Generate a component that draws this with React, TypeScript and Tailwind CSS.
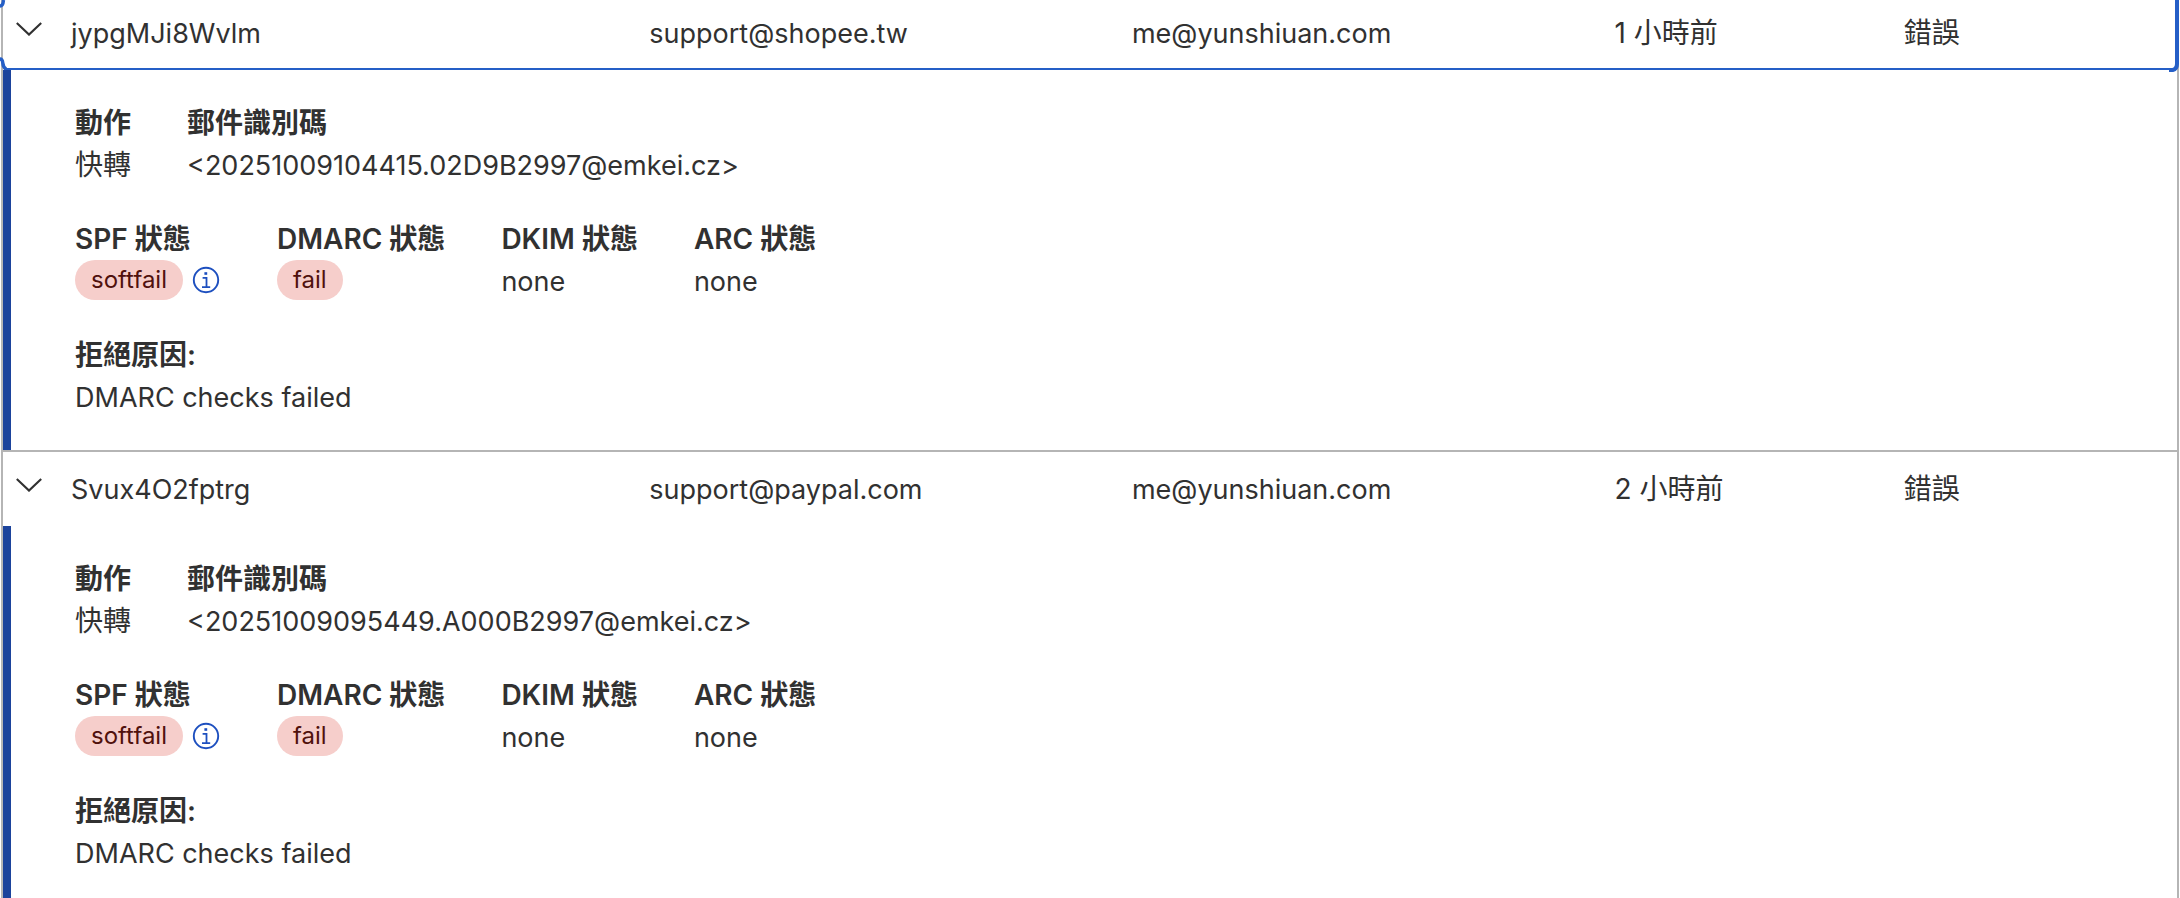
import { useState } from 'react';

type LogEntry = {
  id: string;
  from: string;
  to: string;
  time: string;
  result: string;
  messageId: string;
};

const entries: LogEntry[] = [
  {
    id: 'jypgMJi8Wvlm',
    from: 'support@shopee.tw',
    to: 'me@yunshiuan.com',
    time: '1 小時前',
    result: '錯誤',
    messageId: '<20251009104415.02D9B2997@emkei.cz>',
  },
  {
    id: 'Svux4O2fptrg',
    from: 'support@paypal.com',
    to: 'me@yunshiuan.com',
    time: '2 小時前',
    result: '錯誤',
    messageId: '<20251009095449.A000B2997@emkei.cz>',
  },
];

function Chevron() {
  return (
    <svg width="26" height="14" viewBox="0 0 26 14" fill="none" aria-hidden="true">
      <path d="M0.8 1 13 12.6 25.2 1" stroke="#313131" strokeWidth="2.1" />
    </svg>
  );
}

function InfoIcon() {
  return (
    <svg width="28" height="28" viewBox="0 0 28 28" fill="none" aria-hidden="true">
      <circle cx="14" cy="14" r="12.2" stroke="#1d4fbf" strokeWidth="1.9" />
      <path d="M10.6 11.9H14.5V21.2M10 21.2H18.2" stroke="#1d4fbf" strokeWidth="1.8" />
      <rect x="12.4" y="6.2" width="2.8" height="2.6" fill="#1d4fbf" />
    </svg>
  );
}

function Latin({ children }: { children: React.ReactNode }) {
  return <span className="text-[27px]">{children}</span>;
}

function Field({ label, children }: { label: string; children: React.ReactNode }) {
  return (
    <div>
      <dt className="font-semibold">{label}</dt>
      <dd className="h-[42px]">{children}</dd>
    </div>
  );
}

function Badge({ children }: { children: React.ReactNode }) {
  return (
    <span className="flex h-10 items-center rounded-full bg-[#f6cecb] px-4 text-2xl text-[#50110d]">
      {children}
    </span>
  );
}

function Details({ entry }: { entry: LogEntry }) {
  return (
    <div className="flex flex-col gap-8 border-l-8 border-[#1b439c] py-8 pl-16">
      <dl className="flex gap-14">
        <Field label="動作">快轉</Field>
        <Field label="郵件識別碼">
          <Latin>{entry.messageId}</Latin>
        </Field>
      </dl>
      <dl className="flex gap-14">
        <Field label="SPF 狀態">
          <div className="flex items-center gap-2">
            <Badge>softfail</Badge>
            <button type="button" aria-label="SPF" className="flex w-[30px] justify-center">
              <InfoIcon />
            </button>
          </div>
        </Field>
        <Field label="DMARC 狀態">
          <div className="flex">
            <Badge>fail</Badge>
          </div>
        </Field>
        <Field label="DKIM 狀態">
          <Latin>none</Latin>
        </Field>
        <Field label="ARC 狀態">
          <Latin>none</Latin>
        </Field>
      </dl>
      <dl>
        <Field label="拒絕原因:">
          <Latin>DMARC checks failed</Latin>
        </Field>
      </dl>
    </div>
  );
}

export default function App() {
  const [open, setOpen] = useState<Record<string, boolean>>({
    jypgMJi8Wvlm: true,
    Svux4O2fptrg: true,
  });

  return (
    <main className="relative h-screen overflow-hidden bg-white px-px font-['Inter','Noto_Sans_CJK_TC',sans-serif] text-[28px] leading-[42px] text-[#313131]">
      <div className="-mt-1 border-x-2 border-[#b5b5b5]">
        <table className="w-full table-fixed border-separate border-spacing-0 text-left">
          <colgroup>
            <col className="w-[68px]" />
            <col className="w-[26.6%]" />
            <col className="w-[22.2%]" />
            <col className="w-[22.2%]" />
            <col className="w-[13.3%]" />
            <col />
          </colgroup>
          {entries.map((entry, index) => (
            <tbody key={entry.id}>
              <tr
                className={
                  index > 0
                    ? 'h-[76px] *:border-t-2 *:border-[#b5b5b5]'
                    : 'h-[74px]'
                }
              >
                <td className="p-0">
                  <button
                    type="button"
                    aria-label={entry.id}
                    aria-expanded={open[entry.id]}
                    className="flex h-11 w-13 items-center justify-center pb-2"
                    onClick={() => setOpen({ ...open, [entry.id]: !open[entry.id] })}
                  >
                    <Chevron />
                  </button>
                </td>
                <td className="p-0">
                  <Latin>{entry.id}</Latin>
                </td>
                <td className="p-0">
                  <Latin>{entry.from}</Latin>
                </td>
                <td className="p-0">
                  <Latin>{entry.to}</Latin>
                </td>
                <td className="p-0">{entry.time}</td>
                <td className="p-0">{entry.result}</td>
              </tr>
              {open[entry.id] && (
                <tr>
                  <td colSpan={6} className="p-0">
                    <Details entry={entry} />
                  </td>
                </tr>
              )}
            </tbody>
          ))}
        </table>
      </div>
      <div className="pointer-events-none absolute inset-x-0 top-0 h-[72px]">
        <div className="absolute inset-x-1 top-[68px] h-0.5 bg-[#255fc7]" />
        <svg className="absolute top-0 left-0" width="8" height="72" viewBox="0 0 8 72" fill="none">
          <path d="M0 6Q3 6 3.5 0M0 59Q2.5 59 2.8 63T6 69" stroke="#255fc7" strokeWidth="3.4" />
        </svg>
        <svg className="absolute top-0 right-0" width="12" height="72" viewBox="0 0 12 72" fill="none">
          <path d="M9 0V64Q9 70.5 1 70.5" stroke="#255fc7" strokeWidth="4" />
        </svg>
      </div>
    </main>
  );
}
